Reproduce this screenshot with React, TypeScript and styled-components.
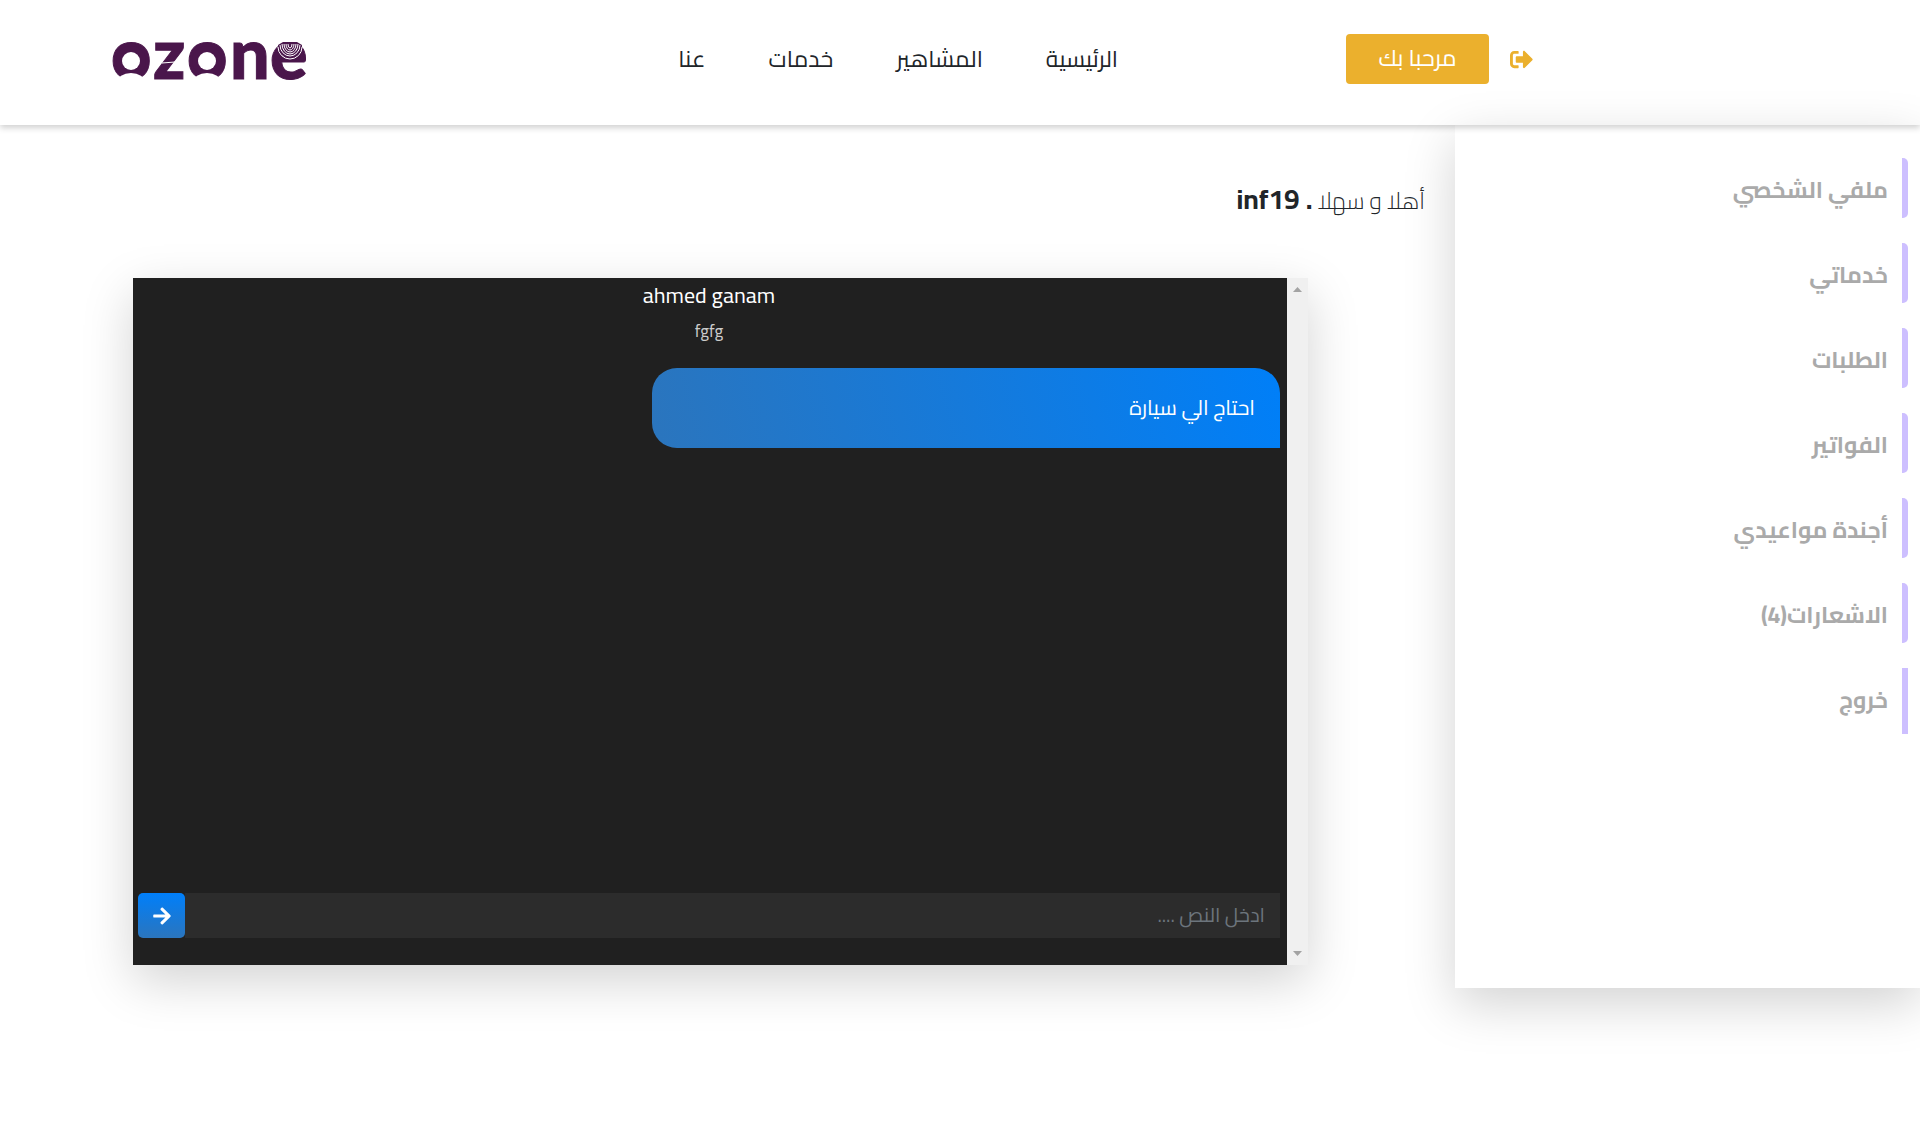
import React, { useState } from "react";
import styled, { createGlobalStyle } from "styled-components";
import { FaArrowRight, FaSignOutAlt } from "react-icons/fa";

const GlobalStyle = createGlobalStyle`
  *, *::before, *::after { box-sizing: border-box; }
  body {
    margin: 0;
    background: #fff;
    color: #212529;
    font-family: Cairo, Roboto, "DejaVu Sans Condensed", "DejaVu Sans", sans-serif;
    font-size: 23px;
    font-variant-ligatures: none;
    line-height: 30px;
  }
  button, input { font-family: inherit; font-variant-ligatures: inherit; }
`;

const Page = styled.div`
  min-height: 100vh;
`;

const Header = styled.header`
  position: relative;
  z-index: 1;
  display: flex;
  align-items: center;
  height: 125px;
  padding: 0 387px 7px 100px;
  box-shadow: 0 3px 6px rgba(0, 0, 0, 0.18);
`;

const Account = styled.div`
  display: flex;
  align-items: center;
  gap: 21px;
`;

const LogoutButton = styled.button`
  display: flex;
  padding: 0;
  border: 0;
  background: none;
  color: #ebb02d;
  font-size: 23px;
  cursor: pointer;
`;

const WelcomeButton = styled.button`
  min-width: 143px;
  height: 50px;
  padding: 0 30px 2px;
  border: 0;
  border-radius: 4px;
  background: #ebb02d;
  color: #fff;
  font-size: 23px;
  line-height: 30px;
  cursor: pointer;
`;

const Nav = styled.nav`
  display: flex;
  gap: 63px;
  margin-inline-start: 228px;
`;

const NavLink = styled.a`
  color: #212529;
  text-decoration: none;
  white-space: nowrap;
`;

const LogoLink = styled.a`
  display: flex;
  margin-inline-start: auto;
`;

const Layout = styled.div`
  display: flex;
  align-items: flex-start;
`;

const Sidebar = styled.aside`
  flex: 0 0 465px;
  min-height: 863px;
  padding: 33px 12px;
  background: #fff;
  box-shadow: 0 16px 48px rgba(0, 0, 0, 0.175);
`;

const Menu = styled.ul`
  display: grid;
  gap: 25px;
  margin: 0;
  padding: 0;
  list-style: none;
`;

const MenuItem = styled.li`
  height: 60px;
  padding: 17px 14px;
  border-inline-start: 6px solid #cdbfff;
  border-radius: 5px;

  &:last-child {
    height: 66px;
    border-radius: 0;
  }
`;

const MenuLink = styled.a`
  color: #aaa;
  font-size: 23px;
  font-weight: 700;
  text-decoration: none;
`;

const Content = styled.main`
  flex: 1;
  min-width: 0;
  padding: 61px 30px 0 0;
`;

const Greeting = styled.h1`
  margin: 0;
  font-size: 23px;
  font-weight: 300;
  line-height: 30px;
`;

const UserName = styled.strong`
  font-size: 28px;
  font-weight: 700;
  line-height: 20px;
`;

const Chat = styled.section`
  display: flex;
  height: 687px;
  margin: 62px 117px 0 133px;
  background: #202020;
  box-shadow: 0 16px 48px rgba(0, 0, 0, 0.175);
`;

const ScrollTrack = styled.div`
  display: flex;
  flex: 0 0 21px;
  flex-direction: column;
  align-items: center;
  justify-content: space-between;
  padding: 9px 0;
  background: #f0f0f0;
`;

const ChatBody = styled.div`
  display: flex;
  flex: 1;
  flex-direction: column;
  min-width: 0;
  padding: 2px 7px 27px 5px;
`;

const ChatTitle = styled.h2`
  margin: 0;
  color: #fff;
  font-size: 22px;
  font-weight: 400;
  line-height: 30px;
  text-align: center;
`;

const ChatSubtitle = styled.p`
  margin: 8px 0 0;
  color: #ccc;
  font-size: 17px;
  line-height: 26px;
  text-align: center;
`;

const Messages = styled.div`
  flex: 1;
  padding-top: 24px;
`;

const Bubble = styled.p`
  width: 55%;
  margin: 0;
  padding: 25px;
  border-radius: 25px 25px 0 25px;
  background: linear-gradient(75deg, #2b75bd, #007ff8);
  color: #fff;
  font-size: 21px;
  line-height: 30px;
`;

const Composer = styled.form`
  display: flex;
  height: 45px;
`;

const MessageInput = styled.input`
  flex: 1;
  min-width: 0;
  padding: 0 15px 2px;
  border: 0;
  background: #2c2c2c;
  color: #fff;
  font-size: 20px;

  &::placeholder { color: #6c757d; opacity: 1; }
`;

const SendButton = styled.button`
  display: flex;
  flex: 0 0 47px;
  align-items: center;
  justify-content: center;
  padding: 0;
  border: 0;
  border-radius: 5px;
  background: linear-gradient(#007ffa, #2b75bd);
  color: #fff;
  font-size: 20px;
  cursor: pointer;
`;

const navLinks = ["الرئيسية", "المشاهير", "خدمات", "عنا"];

const menuLinks = [
  "ملفي الشخصي",
  "خدماتي",
  "الطلبات",
  "الفواتير",
  "أجندة مواعيدي",
  "الاشعارات(4)",
  "خروج",
];

function Logo() {
  return (
    <svg width="220" height="108" viewBox="-12 -37 220 108" direction="ltr" role="img" aria-label="ozone">
      <text
        x="-1 41 75 118 158"
        y="37"
        fill="#4a164b"
        stroke="#4a164b"
        strokeWidth="1"
        fontFamily="Lato, sans-serif"
        fontSize="70"
        fontWeight="900"
        textAnchor="start"
      >
        ozone
      </text>
      <g fill="#4a164b">
        <circle cx="19" cy="19" r="15" />
        <circle cx="95" cy="19" r="15" />
      </g>
      <g fill="#fff">
        <circle cx="19" cy="19" r="9" />
        <ellipse cx="19" cy="40" rx="14" ry="9" />
        <circle cx="95" cy="19" r="9" />
        <ellipse cx="95" cy="40" rx="14" ry="9" />
      </g>
      <path d="M50 21l13 -1" stroke="#fff" strokeWidth="1" />
      <path d="M166 3a12 13 0 0 0 24 0l-5-3h-14z" fill="#4a164b" />
      <g fill="none" stroke="#fff" strokeWidth="1">
        <path d="M166 5a12 12 0 0 0 24 0" />
        <path d="M168 3a10 11 0 0 0 20 0" />
        <path d="M170 2a8 10 0 0 0 16 0" />
        <path d="M172 2a6 8 0 0 0 12 0" />
        <path d="M174 2a4 6 0 0 0 8 0" />
        <path d="M176 2a2 4 0 0 0 4 0" />
      </g>
    </svg>
  );
}

function ScrollArrow({ down = false }: { down?: boolean }) {
  return (
    <svg width="9" height="5" viewBox="0 0 9 5" aria-hidden="true">
      <path d={down ? "M0 0h9L4.500 5z" : "M0 5h9L4.500 0z"} fill="#a3a3a3" />
    </svg>
  );
}

export default function App() {
  const [message, setMessage] = useState("");

  return (
    <Page dir="rtl" lang="ar">
      <GlobalStyle />
      <Header>
        <Account>
          <LogoutButton type="button" aria-label="خروج">
            <FaSignOutAlt />
          </LogoutButton>
          <WelcomeButton type="button">مرحبا بك</WelcomeButton>
        </Account>
        <Nav>
          {navLinks.map((label) => (
            <NavLink href="#" key={label}>{label}</NavLink>
          ))}
        </Nav>
        <LogoLink href="#"><Logo /></LogoLink>
      </Header>
      <Layout>
        <Sidebar>
          <Menu>
            {menuLinks.map((label) => (
              <MenuItem key={label}>
                <MenuLink href="#">{label}</MenuLink>
              </MenuItem>
            ))}
          </Menu>
        </Sidebar>
        <Content>
          <Greeting>
            أهلا و سهلا <UserName>. inf19</UserName>
          </Greeting>
          <Chat>
            <ScrollTrack>
              <ScrollArrow />
              <ScrollArrow down />
            </ScrollTrack>
            <ChatBody>
              <ChatTitle>ahmed ganam</ChatTitle>
              <ChatSubtitle>fgfg</ChatSubtitle>
              <Messages>
                <Bubble>احتاج الي سيارة</Bubble>
              </Messages>
              <Composer onSubmit={(event) => event.preventDefault()}>
                <MessageInput
                  aria-label="ادخل النص"
                  placeholder="ادخل النص ...."
                  value={message}
                  onChange={(event) => setMessage(event.target.value)}
                />
                <SendButton type="submit" aria-label="ارسال">
                  <FaArrowRight />
                </SendButton>
              </Composer>
            </ChatBody>
          </Chat>
        </Content>
      </Layout>
    </Page>
  );
}
